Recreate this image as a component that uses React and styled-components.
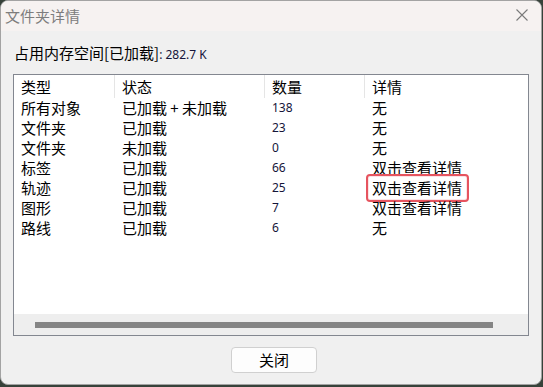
import styled, { createGlobalStyle } from 'styled-components';

const GlobalStyle = createGlobalStyle`
  html, body {
    margin: 0;
    padding: 0;
    width: 543px;
    height: 387px;
    overflow: hidden;
    background: #37423a;
  }
`

const CJK = `"Noto Sans CJK SC", "Noto Sans", sans-serif`
const LATIN = `"Noto Sans", "Liberation Sans", sans-serif`

const Window = styled.div`
  width: 542px;
  height: 385px;
  box-sizing: border-box;
  border: 1px solid #a3a3a3;
  border-radius: 8px;
  overflow: hidden;
  background: #f0f0f0;
  display: flex;
  flex-direction: column;
  font-family: ${CJK};
  color: #000;
`

const TitleBar = styled.div`
  height: 30px;
  flex: none;
  background: #f6f2f1;
  display: flex;
  align-items: center;
  justify-content: space-between;
  padding: 0 13px 0 4px;
`

const Title = styled.span`
  font-size: 15px;
  color: #7d7d7d;
  line-height: 20px;
  margin-top: -1px;
`

const CloseIcon = styled.svg`
  width: 12px;
  height: 12px;
  margin-top: -2px;
`

const Body = styled.div`
  flex: 1;
  display: flex;
  flex-direction: column;
  padding: 0 12px;
`

const Summary = styled.div`
  font-size: 15px;
  line-height: 20px;
  padding: 12px 0 0 1px;
  margin-bottom: 9px;
`

const Num = styled.span`
  font-family: ${LATIN};
  font-size: 12px;
  color: #15153a;
`

const ListBox = styled.div`
  height: 262px;
  box-sizing: border-box;
  border: 1px solid #838790;
  background: #fff;
  display: flex;
  flex-direction: column;
`

const Rows = styled.div`
  flex: 1;
`

const Grid = styled.div`
  display: grid;
  grid-template-columns: 100px 150px 100px 1fr;
  height: ${p => p.$h}px;
  line-height: ${p => p.$h}px;
  font-size: 15px;
`

const HeadCell = styled.div`
  padding-left: 7px;
  border-left: ${p => (p.$first ? 'none' : '1px solid #e5e5e5')};
  white-space: nowrap;
`

const Cell = styled.div`
  position: relative;
  padding-left: ${p => (p.$first ? 7 : 8)}px;
  white-space: nowrap;
  ${p => p.$num && `font-family: ${LATIN}; font-size: 12px; color: #15153a;`}
`

const Mark = styled.div`
  position: absolute;
  left: 2px;
  top: -4px;
  width: 103px;
  height: 28px;
  box-sizing: border-box;
  border: 2px solid #e6545f;
  border-radius: 4px;
  box-shadow: inset 0 0 0 1px #fbe3e5;
`

const Track = styled.div`
  height: 21px;
  flex: none;
  background: #eeeeee;
  display: flex;
  align-items: center;
  padding-left: 21px;
`

const Thumb = styled.div`
  width: 458px;
  height: 6px;
  background: #858585;
`

const Footer = styled.div`
  display: flex;
  justify-content: center;
  padding: 11px 0 0 6px;
`

const Button = styled.button`
  width: 86px;
  height: 26px;
  box-sizing: border-box;
  border: 1px solid #d0d0d0;
  border-radius: 4px;
  background: #fdfdfd;
  font-family: ${CJK};
  font-size: 15px;
  line-height: 22px;
  color: #000;
  padding: 0;
`

const rows = [
  { type: '所有对象', state: '已加载 + 未加载', count: 138, detail: '无' },
  { type: '文件夹', state: '已加载', count: 23, detail: '无' },
  { type: '文件夹', state: '未加载', count: 0, detail: '无' },
  { type: '标签', state: '已加载', count: 66, detail: '双击查看详情' },
  { type: '轨迹', state: '已加载', count: 25, detail: '双击查看详情', mark: true },
  { type: '图形', state: '已加载', count: 7, detail: '双击查看详情' },
  { type: '路线', state: '已加载', count: 6, detail: '无' }
]

export default function App () {
  return (
    <>
      <GlobalStyle />
      <Window>
        <TitleBar>
          <Title>文件夹详情</Title>
          <CloseIcon viewBox='0 0 12 12'>
            <path d='M0.5 0.5 L11.5 11.5 M11.5 0.5 L0.5 11.5' stroke='#7a7a7a' strokeWidth='1.1' fill='none' />
          </CloseIcon>
        </TitleBar>
        <Body>
          <Summary>占用内存空间[已加载]<Num>: 282.7 K</Num></Summary>
          <ListBox>
            <Rows>
              <Grid $h={23}>
                <HeadCell $first>类型</HeadCell>
                <HeadCell>状态</HeadCell>
                <HeadCell>数量</HeadCell>
                <HeadCell>详情</HeadCell>
              </Grid>
              {rows.map((r, i) => (
                <Grid $h={20} key={`${r.type}_${i}`}>
                  <Cell $first>{r.type}</Cell>
                  <Cell>{r.state}</Cell>
                  <Cell $num>{r.count}</Cell>
                  <Cell>
                    {r.detail}
                    {r.mark && <Mark />}
                  </Cell>
                </Grid>
              ))}
            </Rows>
            <Track><Thumb /></Track>
          </ListBox>
          <Footer>
            <Button>关闭</Button>
          </Footer>
        </Body>
      </Window>
    </>
  )
}
